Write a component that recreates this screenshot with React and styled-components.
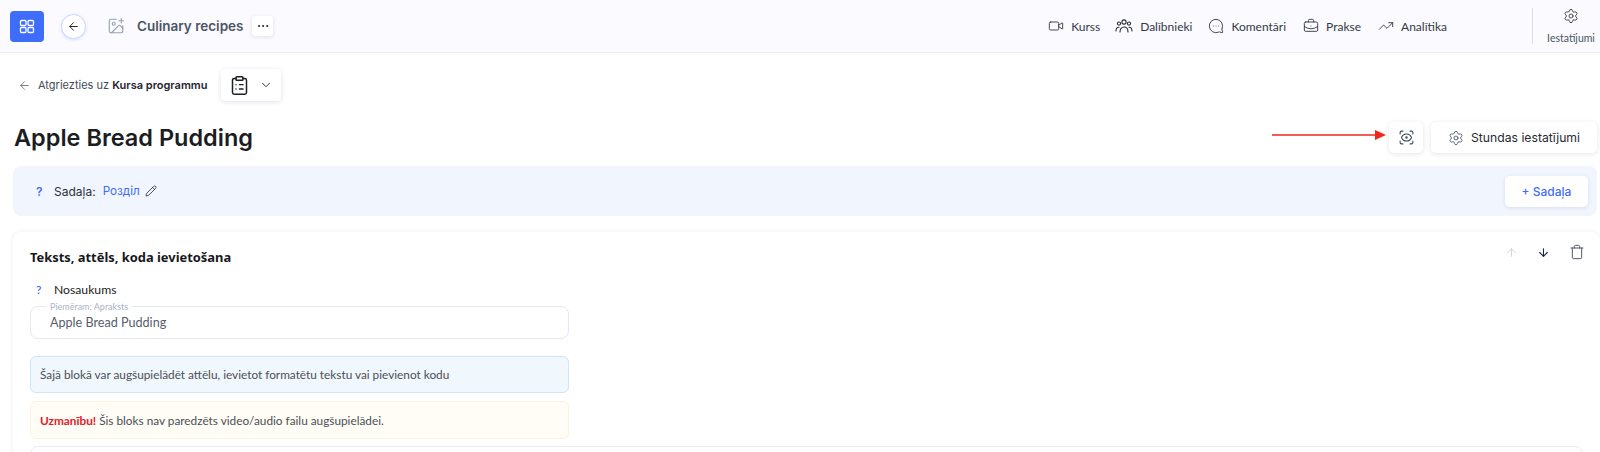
import styled, { createGlobalStyle } from "styled-components";
import {
  ArrowDown,
  ArrowLeft,
  ArrowUp,
  BriefcaseBusiness,
  ChevronDown,
  ClipboardList,
  ImagePlus,
  MessageCircleMore,
  MoreHorizontal,
  Pencil,
  ScanEye,
  Settings,
  Trash,
  TrendingUp,
  Video,
} from "lucide-react";

const GlobalStyle = createGlobalStyle`
  html, body {
    margin: 0;
    background: #fff;
    height: 452px;
    overflow: hidden;
    font-family: Inter, "Liberation Sans", sans-serif;
  }
`;

const Page = styled.div`
  width: 1600px;
  height: 452px;
  overflow: hidden;
`;

const Header = styled.header`
  height: 53px;
  box-sizing: border-box;
  background: #fafaff;
  border-bottom: 1px solid #ececf1;
  display: flex;
  align-items: center;
  padding-left: 10px;
`;

const AppButton = styled.button`
  width: 34px;
  height: 31px;
  border: none;
  border-radius: 4px;
  background: #3f6dfb;
  color: #fff;
  display: flex;
  align-items: center;
  justify-content: center;
  padding: 0;
`;

const BackCircle = styled.button`
  width: 25px;
  height: 25px;
  margin-left: 17px;
  border-radius: 50%;
  border: 1px solid #cdd8fb;
  background: #fff;
  color: #222;
  box-shadow: 0 1px 3px rgba(63, 109, 251, 0.2);
  display: flex;
  align-items: center;
  justify-content: center;
  padding: 0;
`;

const CourseIcon = styled.span`
  display: flex;
  margin-left: 21px;
  color: #98a1b3;
`;

const CourseTitle = styled.span`
  margin-left: 12px;
  font-size: 13.5px;
  font-weight: 600;
  color: #4b5563;
`;

const DotsButton = styled.button`
  width: 21px;
  height: 20px;
  margin-left: 9px;
  border: none;
  border-radius: 3px;
  background: #fff;
  color: #222;
  box-shadow: 0 1px 4px rgba(30, 40, 90, 0.12);
  display: flex;
  align-items: center;
  justify-content: center;
  padding: 0;
`;

const Nav = styled.nav`
  margin-left: auto;
  display: flex;
  align-items: center;
  height: 100%;
`;

const NavItem = styled.a`
  display: flex;
  align-items: center;
  gap: 7px;
  margin-left: ${(p) => p.$gap}px;
  font-family: Lato, sans-serif;
  font-size: 12px;
  color: #333a46;
  svg {
    color: #2b2f38;
  }
`;

const SettingsLink = styled.a`
  width: 68px;
  height: 36px;
  box-sizing: border-box;
  margin-left: 85px;
  padding-left: 9px;
  border-left: 1px solid #dcdde3;
  display: flex;
  flex-direction: column;
  align-items: center;
  justify-content: space-between;
  font-family: Lato, sans-serif;
  font-size: 10.5px;
  color: #4b5563;
  svg {
    color: #333;
  }
`;

const FlippedChat = styled(MessageCircleMore)`
  transform: scaleX(-1);
`;

const Content = styled.main`
  padding: 0 3px 0 13px;
`;

const BackRow = styled.div`
  display: flex;
  align-items: center;
  height: 32px;
  margin-top: 16px;
  padding-left: 5px;
  font-size: 11px;
  color: #444b57;
  b {
    font-weight: 600;
    color: #1f2430;
  }
`;

const BackText = styled.span`
  margin-left: 7px;
`;

const LessonMenu = styled.button`
  width: 60px;
  height: 32px;
  margin-left: 14px;
  border: none;
  border-radius: 4px;
  background: #fff;
  color: #1c1f27;
  box-shadow: 0 1px 5px rgba(30, 40, 90, 0.14);
  display: flex;
  align-items: center;
  justify-content: center;
  gap: 9px;
  padding: 0;
`;

const TitleRow = styled.div`
  display: flex;
  align-items: center;
  margin-top: 21px;
  height: 31px;
`;

const PageTitle = styled.h1`
  margin: 0 auto 0 1px;
  font-size: 23.5px;
  line-height: 31px;
  font-weight: 600;
  color: #1c1d21;
`;

const PointerArrow = styled.svg`
  width: 114px;
  height: 12px;
  margin-right: 3px;
  margin-top: -6px;
`;

const IconButton = styled.button`
  width: 34px;
  height: 31px;
  border: none;
  border-radius: 5px;
  background: #fff;
  color: #3f4652;
  box-shadow: 0 1px 5px rgba(30, 40, 90, 0.12);
  display: flex;
  align-items: center;
  justify-content: center;
  padding: 0;
`;

const SettingsButton = styled.button`
  width: 166px;
  height: 31px;
  margin-left: 8px;
  border: none;
  border-radius: 5px;
  background: #fff;
  color: #26292f;
  font-family: inherit;
  font-size: 12.2px;
  box-shadow: 0 1px 5px rgba(30, 40, 90, 0.12);
  display: flex;
  align-items: center;
  justify-content: center;
  gap: 7px;
  padding: 0;
  svg {
    color: #4b5563;
  }
`;

const SectionBand = styled.section`
  margin-top: 13px;
  height: 50px;
  border-radius: 8px;
  background: #f1f5fe;
  display: flex;
  align-items: center;
  padding: 0 9px 0 23px;
  font-size: 12px;
  color: #2d3038;
`;

const Hint = styled.span`
  color: #3f6dfb;
  font-size: 12px;
  font-weight: 600;
  width: 18px;
`;

const SectionName = styled.span`
  margin: 0 5px 0 7px;
  font-size: 11.7px;
  color: #3f6dfb;
`;

const AddSection = styled.button`
  margin-left: auto;
  width: 83px;
  height: 31px;
  border: none;
  border-radius: 5px;
  background: #fff;
  color: #3f6dfb;
  font-family: inherit;
  font-size: 12px;
  font-weight: 500;
  box-shadow: 0 1px 4px rgba(30, 40, 90, 0.12);
`;

const Card = styled.section`
  margin: 16px -3px 0 0;
  height: 240px;
  box-sizing: border-box;
  padding: 16px 17px;
  border-radius: 8px 8px 0 0;
  box-shadow: 0 0 5px rgba(30, 40, 90, 0.08);
`;

const CardHead = styled.div`
  display: flex;
  align-items: center;
  height: 18px;
`;

const CardTitle = styled.h2`
  margin: 0 auto 0 0;
  font-family: "Noto Sans", sans-serif;
  font-size: 12.9px;
  font-weight: 700;
  color: #17181c;
`;

const CardTools = styled.div`
  display: flex;
  align-items: center;
  gap: 19px;
  margin: -10px -2px 0 0;
`;

const FieldLabel = styled.div`
  display: flex;
  align-items: center;
  margin: 15px 0 0 6px;
  height: 16px;
  font-family: Lato, sans-serif;
  font-size: 12.2px;
  color: #1c1d21;
`;

const InputBox = styled.div`
  position: relative;
  width: 539px;
  height: 33px;
  box-sizing: border-box;
  margin-top: 9px;
  border: 1px solid #e4e8f3;
  border-radius: 8px;
  padding-left: 19px;
  display: flex;
  align-items: center;
  font-family: Lato, sans-serif;
  font-size: 12.6px;
  color: #565e6b;
`;

const FloatLabel = styled.span`
  position: absolute;
  top: -5px;
  left: 15px;
  padding: 0 4px;
  background: #fff;
  font-family: Lato, sans-serif;
  font-size: 9px;
  line-height: 9px;
  color: #aab3c5;
`;

const Notice = styled.div`
  width: 539px;
  height: ${(p) => (p.$warn ? 38 : 37)}px;
  box-sizing: border-box;
  margin-top: ${(p) => p.$top}px;
  border: 1px solid ${(p) => (p.$warn ? "#fbf3de" : "#cfe4f7")};
  border-radius: 6px;
  background: ${(p) => (p.$warn ? "#fffdf5" : "#f0f7fd")};
  padding-left: 9px;
  display: flex;
  align-items: center;
  font-family: Lato, sans-serif;
  font-size: 11.8px;
  color: #4b4f56;
  white-space: pre;
  b {
    color: #e0202b;
    font-weight: 700;
  }
`;

const EditorBox = styled.div`
  height: 40px;
  margin-top: 7px;
  border: 1px solid #e9ebf2;
  border-radius: 8px;
`;

const GridIcon = () => (
  <svg width="16" height="15" viewBox="0 0 16 15" fill="none" stroke="currentColor" strokeWidth="1.3">
    <rect x="1.5" y="1.5" width="5.5" height="5" rx="1" />
    <rect x="9" y="1.5" width="5.5" height="5" rx="1" />
    <rect x="1.5" y="8.5" width="5.5" height="5" rx="1" />
    <rect x="9" y="8.5" width="5.5" height="5" rx="1" />
  </svg>
);

const UsersIcon = () => (
  <svg width="18" height="16" viewBox="0 0 18 16" fill="none" stroke="currentColor" strokeWidth="1.1" strokeLinecap="round">
    <circle cx="9" cy="4" r="2.1" />
    <circle cx="4" cy="5.6" r="1.6" />
    <circle cx="14" cy="5.6" r="1.6" />
    <path d="M5 14c0-3 1.6-5 4-5s4 2 4 5" />
    <path d="M1 13c0-2.2 1-3.8 3-3.8" />
    <path d="M17 13c0-2.2-1-3.8-3-3.8" />
  </svg>
);

const App = () => {
  return (
    <Page>
      <GlobalStyle />
      <Header>
        <AppButton><GridIcon /></AppButton>
        <BackCircle><ArrowLeft size={13} strokeWidth={1.8} /></BackCircle>
        <CourseIcon><ImagePlus size={18} strokeWidth={1.5} /></CourseIcon>
        <CourseTitle>Culinary recipes</CourseTitle>
        <DotsButton><MoreHorizontal size={14} strokeWidth={1.7} /></DotsButton>
        <Nav>
          <NavItem $gap={0}><Video size={16} strokeWidth={1.3} />Kurss</NavItem>
          <NavItem $gap={15}><UsersIcon />Dalībnieki</NavItem>
          <NavItem $gap={16}><FlippedChat size={16} strokeWidth={1.3} />Komentāri</NavItem>
          <NavItem $gap={17}><BriefcaseBusiness size={16} strokeWidth={1.3} />Prakse</NavItem>
          <NavItem $gap={17}><TrendingUp size={16} strokeWidth={1.3} />Analītika</NavItem>
          <SettingsLink><Settings size={16} strokeWidth={1.3} />Iestatījumi</SettingsLink>
        </Nav>
      </Header>
      <Content>
        <BackRow>
          <ArrowLeft size={13} strokeWidth={1.3} />
          <BackText>Atgriezties uz <b>Kursa programmu</b></BackText>
          <LessonMenu>
            <ClipboardList size={21} strokeWidth={1.7} />
            <ChevronDown size={14} strokeWidth={1.5} />
          </LessonMenu>
        </BackRow>
        <TitleRow>
          <PageTitle>Apple Bread Pudding</PageTitle>
          <PointerArrow viewBox="0 0 114 12">
            <path d="M0 6h104" stroke="#f0261c" strokeWidth="1.4" />
            <path d="M103 1l11 5-11 5z" fill="#f0261c" />
          </PointerArrow>
          <IconButton><ScanEye size={17} strokeWidth={1.5} /></IconButton>
          <SettingsButton><Settings size={16} strokeWidth={1.3} />Stundas iestatījumi</SettingsButton>
        </TitleRow>
        <SectionBand>
          <Hint>?</Hint>
          Sadaļa:
          <SectionName>Розділ</SectionName>
          <Pencil size={12} strokeWidth={1.5} color="#1c1f27" />
          <AddSection>+ Sadaļa</AddSection>
        </SectionBand>
        <Card>
          <CardHead>
            <CardTitle>Teksts, attēls, koda ievietošana</CardTitle>
            <CardTools>
              <ArrowUp size={13} strokeWidth={1.5} color="#c9ccd3" />
              <ArrowDown size={13} strokeWidth={2} color="#1b2540" />
              <Trash size={16} strokeWidth={1.4} color="#444b57" />
            </CardTools>
          </CardHead>
          <FieldLabel><Hint>?</Hint>Nosaukums</FieldLabel>
          <InputBox>
            <FloatLabel>Piemēram: Apraksts</FloatLabel>
            Apple Bread Pudding
          </InputBox>
          <Notice $top={17}>Šajā blokā var augšupielādēt attēlu, ievietot formatētu tekstu vai pievienot kodu</Notice>
          <Notice $top={8} $warn><b>Uzmanību!</b> Šis bloks nav paredzēts video/audio failu augšupielādei.</Notice>
          <EditorBox />
        </Card>
      </Content>
    </Page>
  );
};

export default App;
